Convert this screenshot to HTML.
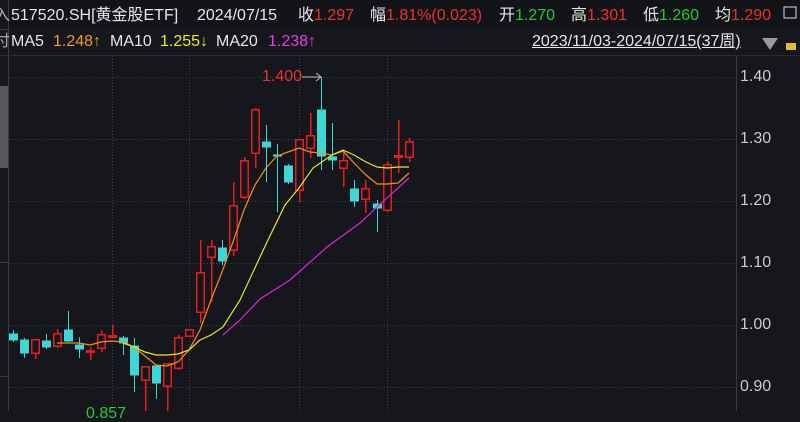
<!DOCTYPE html>
<html><head><meta charset="utf-8"><style>
html,body{margin:0;padding:0;background:#15171c;width:800px;height:411px;overflow:hidden}
.t{position:absolute;font-family:"Liberation Sans","Noto Sans CJK SC",sans-serif;font-size:16px;line-height:16px;white-space:nowrap;color:#e6e6e6}
.r{color:#f0302e}.g{color:#22c93a}.o{color:#f59a1c}.y{color:#e4ec1c}.m{color:#e83ae8}
</style></head><body>
<svg width="800" height="411" style="position:absolute;left:0;top:0" xmlns="http://www.w3.org/2000/svg" shape-rendering="crispEdges">
<rect width="800" height="411" fill="#15171c"/>
<rect x="0" y="0" width="800" height="29" fill="#121418"/>
<rect x="0" y="0" width="8" height="411" fill="#16181c"/>
<rect x="0" y="86" width="8" height="82" fill="#55575d"/>
<line x1="8.5" y1="0" x2="8.5" y2="411" stroke="#3a3c42"/>
<line x1="0" y1="29.5" x2="8" y2="29.5" stroke="#3a3c42"/>
<line x1="0" y1="55.5" x2="800" y2="55.5" stroke="#2a2c32"/>
<line x1="0" y1="262.5" x2="8" y2="262.5" stroke="#3a3c42"/>
<line x1="0" y1="376.5" x2="8" y2="376.5" stroke="#3a3c42"/>
<line x1="736.5" y1="56" x2="736.5" y2="411" stroke="#3a3c42"/>
<g stroke="#3c3f46" stroke-dasharray="1,2">
<line x1="9" y1="77.5" x2="736" y2="77.5"/><line x1="9" y1="139.5" x2="736" y2="139.5"/>
<line x1="9" y1="201.5" x2="736" y2="201.5"/><line x1="9" y1="263.5" x2="736" y2="263.5"/>
<line x1="9" y1="325.5" x2="736" y2="325.5"/><line x1="9" y1="387.5" x2="736" y2="387.5"/>
<line x1="112.5" y1="56" x2="112.5" y2="411"/><line x1="189.5" y1="56" x2="189.5" y2="411"/>
<line x1="299.5" y1="56" x2="299.5" y2="411"/><line x1="387.5" y1="56" x2="387.5" y2="411"/>
</g>
<g stroke="#3fd6d6" fill="#3fd6d6">
<line x1="13.5" y1="330" x2="13.5" y2="342"/><rect x="9.5" y="334" width="8" height="6"/>
<line x1="24.5" y1="338" x2="24.5" y2="358"/><rect x="20.5" y="340" width="8" height="13"/>
<line x1="46.5" y1="334" x2="46.5" y2="349"/><rect x="42.5" y="341" width="8" height="6"/>
<line x1="68.5" y1="311" x2="68.5" y2="342"/><rect x="64.5" y="330" width="8" height="11"/>
<line x1="79.5" y1="337" x2="79.5" y2="358"/><rect x="75.5" y="345" width="8" height="4"/>
<line x1="123.5" y1="336" x2="123.5" y2="355"/><rect x="119.5" y="338" width="8" height="5"/>
<line x1="134.5" y1="338" x2="134.5" y2="392"/><rect x="130.5" y="346" width="8" height="29"/>
<line x1="156.5" y1="366" x2="156.5" y2="399"/><rect x="152.5" y="366" width="8" height="17"/>
<line x1="222.5" y1="240" x2="222.5" y2="265"/><rect x="218.5" y="248" width="8" height="13"/>
<line x1="266.5" y1="125" x2="266.5" y2="182"/><rect x="262.5" y="142" width="8" height="5"/>
<line x1="277.5" y1="144" x2="277.5" y2="212"/><rect x="273.5" y="155" width="8" height="1"/>
<line x1="288.5" y1="164" x2="288.5" y2="184"/><rect x="284.5" y="166" width="8" height="16"/>
<line x1="321.5" y1="77" x2="321.5" y2="170"/><rect x="317.5" y="110" width="8" height="46"/>
<line x1="332.5" y1="123" x2="332.5" y2="170"/><rect x="328.5" y="157" width="8" height="3"/>
<line x1="354.5" y1="180" x2="354.5" y2="207"/><rect x="350.5" y="189" width="8" height="12"/>
<line x1="377.5" y1="200" x2="377.5" y2="232"/><rect x="373.5" y="204" width="8" height="4"/>
</g>
<g fill="#e81c1c">
<rect x="35" y="339" width="1.5" height="20"/><rect x="31" y="339" width="9" height="15"/>
<rect x="57" y="329" width="1.5" height="19"/><rect x="53" y="333" width="9" height="14"/>
<rect x="90" y="347" width="1.5" height="13"/><rect x="86" y="350" width="9" height="3"/>
<rect x="101" y="330" width="1.5" height="22"/><rect x="97" y="334" width="9" height="15"/>
<rect x="112" y="325" width="1.5" height="13"/><rect x="108" y="335" width="9" height="3"/>
<rect x="145" y="366" width="1.5" height="45"/><rect x="141" y="366" width="9" height="15"/>
<rect x="167" y="363" width="1.5" height="48"/><rect x="163" y="363" width="9" height="24"/>
<rect x="178" y="335" width="1.5" height="35"/><rect x="174" y="337" width="9" height="32"/>
<rect x="189" y="329" width="1.5" height="8"/><rect x="185" y="329" width="9" height="8"/>
<rect x="200" y="240" width="1.5" height="83"/><rect x="196" y="272" width="9" height="41"/>
<rect x="211" y="240" width="1.5" height="62"/><rect x="207" y="246" width="9" height="12"/>
<rect x="233" y="182" width="1.5" height="74"/><rect x="229" y="205" width="9" height="46"/>
<rect x="244" y="157" width="1.5" height="42"/><rect x="240" y="160" width="9" height="38"/>
<rect x="255" y="108" width="1.5" height="60"/><rect x="251" y="109" width="9" height="45"/>
<rect x="299" y="139" width="1.5" height="63"/><rect x="295" y="139" width="9" height="52"/>
<rect x="310" y="113" width="1.5" height="45"/><rect x="306" y="135" width="9" height="14"/>
<rect x="343" y="150" width="1.5" height="37"/><rect x="339" y="160" width="9" height="9"/>
<rect x="365" y="180" width="1.5" height="33"/><rect x="361" y="188" width="9" height="12"/>
<rect x="387" y="162" width="1.5" height="50"/><rect x="383" y="164" width="9" height="47"/>
<rect x="398" y="120" width="1.5" height="53"/><rect x="394" y="155" width="9" height="3"/>
<rect x="409" y="138" width="1.5" height="24"/><rect x="405" y="141" width="9" height="17"/>
</g>
<g fill="#15171c">
<rect x="32.5" y="340.5" width="6" height="12"/>
<rect x="54.5" y="334.5" width="6" height="11"/>
<rect x="98.5" y="335.5" width="6" height="12"/>
<rect x="142.5" y="367.5" width="6" height="12"/>
<rect x="164.5" y="364.5" width="6" height="21"/>
<rect x="175.5" y="338.5" width="6" height="29"/>
<rect x="186.5" y="330.5" width="6" height="5"/>
<rect x="197.5" y="273.5" width="6" height="38"/>
<rect x="208.5" y="247.5" width="6" height="9"/>
<rect x="230.5" y="206.5" width="6" height="43"/>
<rect x="241.5" y="161.5" width="6" height="35"/>
<rect x="252.5" y="110.5" width="6" height="42"/>
<rect x="296.5" y="140.5" width="6" height="49"/>
<rect x="307.5" y="136.5" width="6" height="11"/>
<rect x="340.5" y="161.5" width="6" height="6"/>
<rect x="362.5" y="189.5" width="6" height="9"/>
<rect x="384.5" y="165.5" width="6" height="44"/>
<rect x="406.5" y="142.5" width="6" height="14"/>
</g>
<g fill="none" stroke-width="1.2" shape-rendering="auto">
<polyline stroke="#f0901a" points="57,343 79,343 90,345 101,342 112,341 123,342 134,347 145,356 156,365 167,366 178,362 189,350 200,330 211,300 222,272 233,242 244,210 255,185 266,168 277,156 288,152 299,148 310,152 321,153 332,155 343,151 354,163 366,175 377,184 387,184 398,183 409,173"/>
<polyline stroke="#e8e818" points="123,343 134,347 145,352 156,355 167,355 178,354 189,350 200,340 211,335 223,327 240,300 260,257 268,240 285,205 299,188 313,168 332,155 343,150 354,155 366,162 377,167 387,168 398,167 409,167"/>
<polyline stroke="#e020e0" points="223,335 240,320 260,299 290,280 327,247 360,223 377,207 409,178"/>
</g>
<polyline points="302,77 321,77" stroke="#bbb" fill="none"/>
<polyline points="316,73 321,77 316,81" stroke="#bbb" fill="none" shape-rendering="auto"/>
<polygon points="762,38 778,38 770,50" fill="#9a9a9a" shape-rendering="auto"/>
<rect x="784" y="7" width="12" height="11" fill="none" stroke="#ddd"/>
<rect x="786" y="43" width="10" height="7" fill="#e8b830"/>
</svg>
<div class="t" style="left:-6px;top:8px;color:#aaa">入</div>
<div class="t" style="left:11px;top:8px">517520.SH[黄金股ETF]</div>
<div class="t" style="left:197px;top:8px">2024/07/15</div>
<div class="t" style="left:298px;top:8px">收<span class="r">1.297</span></div>
<div class="t" style="left:370px;top:8px">幅<span class="r">1.81%(0.023)</span></div>
<div class="t" style="left:499px;top:8px">开<span class="g">1.270</span></div>
<div class="t" style="left:571px;top:8px">高<span class="r">1.301</span></div>
<div class="t" style="left:643px;top:8px">低<span class="g">1.260</span></div>
<div class="t" style="left:715px;top:8px">均<span class="r">1.290</span></div>
<div class="t" style="left:-6px;top:34px;color:#aaa">付</div>
<div class="t" style="left:11px;top:34px">MA5</div>
<div class="t o" style="left:53px;top:34px">1.248↑</div>
<div class="t" style="left:110px;top:34px">MA10</div>
<div class="t y" style="left:160px;top:34px">1.255↓</div>
<div class="t" style="left:216px;top:34px">MA20</div>
<div class="t m" style="left:268px;top:34px">1.238↑</div>
<div class="t" style="left:532px;top:34px;text-decoration:underline">2023/11/03-2024/07/15(37周)</div>
<div class="t r" style="left:262px;top:69px">1.400</div>
<div class="t g" style="left:86px;top:406px">0.857</div>
<div class="t" style="left:740px;top:69px;color:#ccc">1.40</div>
<div class="t" style="left:740px;top:131px;color:#ccc">1.30</div>
<div class="t" style="left:740px;top:193px;color:#ccc">1.20</div>
<div class="t" style="left:740px;top:255px;color:#ccc">1.10</div>
<div class="t" style="left:740px;top:317px;color:#ccc">1.00</div>
<div class="t" style="left:740px;top:379px;color:#ccc">0.90</div>
</body></html>
